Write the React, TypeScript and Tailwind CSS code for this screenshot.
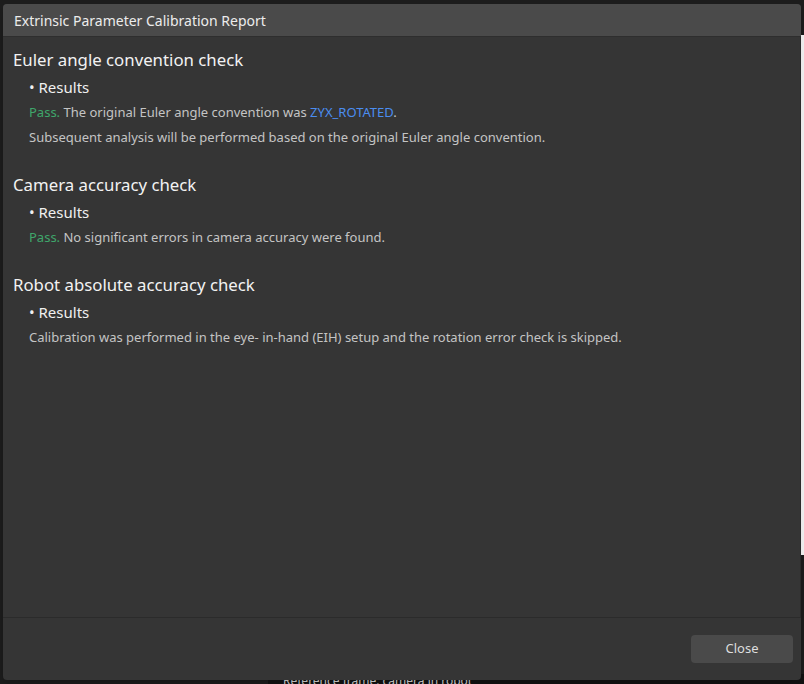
import React from "react";

const sections = [
  {
    title: "Euler angle convention check",
    lines: [
      <>
        <span className="text-[#3fa66b]">Pass.</span> The original Euler angle
        convention was <span className="text-[#4b8df0]">ZYX_ROTATED</span>.
      </>,
      <>Subsequent analysis will be performed based on the original Euler angle convention.</>,
    ],
  },
  {
    title: "Camera accuracy check",
    lines: [
      <>
        <span className="text-[#3fa66b]">Pass.</span> No significant errors in
        camera accuracy were found.
      </>,
    ],
  },
  {
    title: "Robot absolute accuracy check",
    lines: [
      <>
        Calibration was performed in the eye- in-hand (EIH) setup and the
        rotation error check is skipped.
      </>,
    ],
  },
];

const App = () => {
  return (
    <div
      className="relative w-[804px] h-[684px] overflow-hidden bg-[#1c1c1c]"
      style={{ fontFamily: "'Noto Sans', 'Open Sans', sans-serif" }}
    >
      {/* window behind the dialog */}
      <div className="absolute right-0 top-[35px] w-[4px] h-[520px] bg-[#f2f2f2]" />
      <div className="absolute left-[268px] bottom-0 w-[536px] h-[10px] bg-[#121212] text-[12px] leading-[14px] text-[#cfcfcf] pl-[15px]">
        Reference frame: camera in robot
      </div>

      <div className="absolute left-[3px] top-[4px] w-[798px] h-[676px] flex flex-col rounded-[4px] overflow-hidden bg-[#353535] shadow-lg">
        <div className="h-[33px] shrink-0 flex items-center px-[11px] bg-[#4a4a4a] border-b border-[#2e2e2e] text-[14px] text-[#ececec]">
          Extrinsic Parameter Calibration Report
        </div>

        <div className="flex-1 border-b border-r border-[#2b2b2b] px-[10px] pt-[9px]">
          {sections.map((s) => (
            <div key={s.title} className="mb-[21px]">
              <h2 className="text-[16.8px] leading-[28px] text-[#f2f2f2]">{s.title}</h2>
              <div className="pl-[16px] text-[15px] leading-[26px] text-[#f0f0f0]">
                • Results
              </div>
              <div className="pl-[16px] text-[13px] text-[#c4c4c4]">
                {s.lines.map((l, i) => (
                  <p key={i} className="leading-[25px]">
                    {l}
                  </p>
                ))}
              </div>
            </div>
          ))}
        </div>

        <div className="h-[62px] shrink-0 flex items-center justify-end px-[8px]">
          <button className="w-[102px] h-[28px] rounded-[4px] bg-[#4a4a4a] text-[13px] text-[#dedede]">
            Close
          </button>
        </div>
      </div>
    </div>
  );
};

export default App;
